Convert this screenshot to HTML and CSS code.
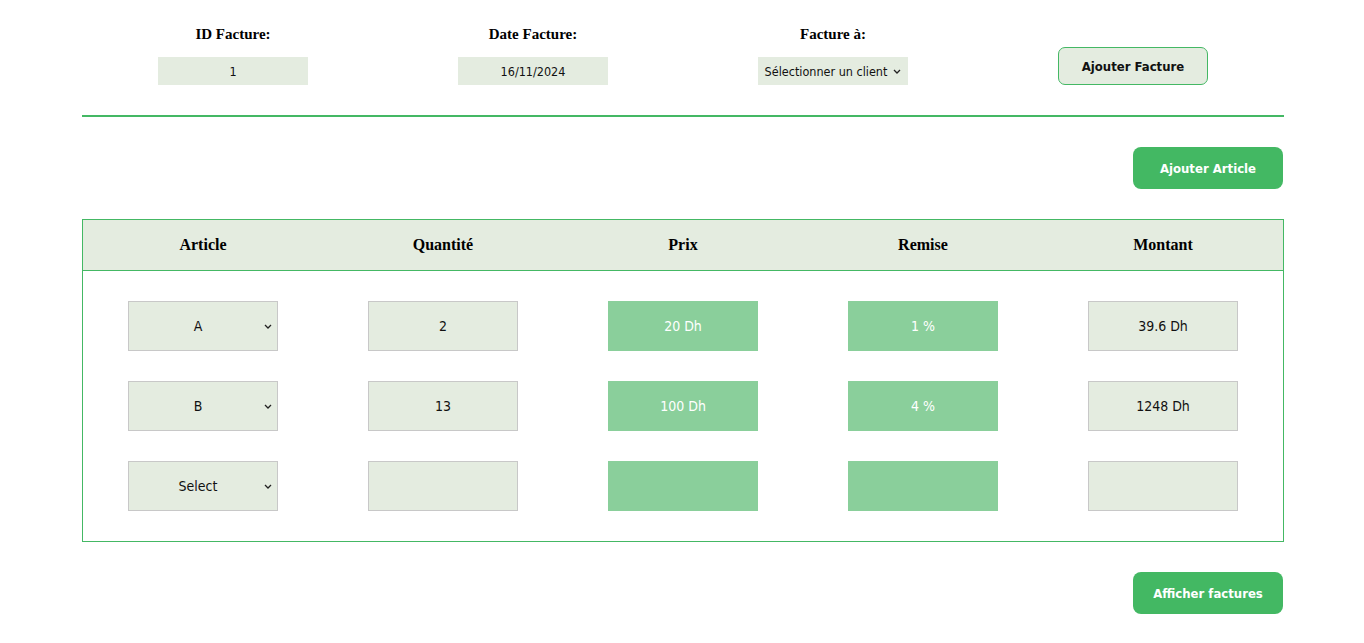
FILE: index.html
```html
<!DOCTYPE html>
<html lang="fr">
<head>
<meta charset="utf-8">
<title>Facture</title>
<link rel="stylesheet" href="styles.css">
</head>
<body>
<div class="page">
  <div class="top-form">
    <div class="field">
      <label class="field-label">ID Facture:</label>
      <input class="field-input" type="text" value="1">
    </div>
    <div class="field">
      <label class="field-label">Date Facture:</label>
      <input class="field-input" type="text" value="16/11/2024">
    </div>
    <div class="field">
      <label class="field-label">Facture à:</label>
      <div class="client-select">
        <span>Sélectionner un client</span>
        <svg class="chev-small" viewBox="0 0 8 5" width="8" height="5"><path d="M1 1 L4 4 L7 1" fill="none" stroke="#222" stroke-width="1.3"/></svg>
      </div>
    </div>
    <div class="field field-btn">
      <button class="btn-outline">Ajouter Facture</button>
    </div>
  </div>
  <hr class="divider">
  <div class="actions">
    <button class="btn-green">Ajouter Article</button>
  </div>
  <div class="table">
    <div class="table-head">
      <div>Article</div>
      <div>Quantité</div>
      <div>Prix</div>
      <div>Remise</div>
      <div>Montant</div>
    </div>
    <div class="table-body">
      <div class="row">
        <div class="cell"><div class="box select-box"><span>A</span><svg class="chev" viewBox="0 0 8 5" width="8" height="5"><path d="M1 1 L4 4 L7 1" fill="none" stroke="#222" stroke-width="1.3"/></svg></div></div>
        <div class="cell"><div class="box">2</div></div>
        <div class="cell"><div class="box box-green">20 Dh</div></div>
        <div class="cell"><div class="box box-green">1 %</div></div>
        <div class="cell"><div class="box">39.6 Dh</div></div>
      </div>
      <div class="row">
        <div class="cell"><div class="box select-box"><span>B</span><svg class="chev" viewBox="0 0 8 5" width="8" height="5"><path d="M1 1 L4 4 L7 1" fill="none" stroke="#222" stroke-width="1.3"/></svg></div></div>
        <div class="cell"><div class="box">13</div></div>
        <div class="cell"><div class="box box-green">100 Dh</div></div>
        <div class="cell"><div class="box box-green">4 %</div></div>
        <div class="cell"><div class="box">1248 Dh</div></div>
      </div>
      <div class="row">
        <div class="cell"><div class="box select-box"><span>Select</span><svg class="chev" viewBox="0 0 8 5" width="8" height="5"><path d="M1 1 L4 4 L7 1" fill="none" stroke="#222" stroke-width="1.3"/></svg></div></div>
        <div class="cell"><div class="box"></div></div>
        <div class="cell"><div class="box box-green"></div></div>
        <div class="cell"><div class="box box-green"></div></div>
        <div class="cell"><div class="box"></div></div>
      </div>
    </div>
  </div>
  <div class="actions actions-bottom">
    <button class="btn-green">Afficher factures</button>
  </div>
</div>
</body>
</html>
```
FILE: styles.css
```css
* { box-sizing: border-box; }
html, body { margin: 0; padding: 0; background: #fff; }
body { font-family: "DejaVu Sans Condensed", "DejaVu Sans", sans-serif; color: #111; }

.page {
  width: 1202px;
  margin-left: calc(50% - 600px);
  padding-top: 26px;
}

.top-form {
  display: grid;
  grid-template-columns: repeat(4, 300px);
  padding-left: 1px;
}
.field {
  display: flex;
  flex-direction: column;
  align-items: center;
}
.field-label {
  font-family: "Liberation Serif", serif;
  font-weight: bold;
  font-size: 15px;
  line-height: 17px;
  height: 17px;
  color: #000;
}
.field-input {
  margin-top: 14px;
  width: 150px;
  height: 28px;
  border: none;
  background: #e4ece0;
  text-align: center;
  font-family: "DejaVu Sans Condensed", "DejaVu Sans", sans-serif;
  font-size: 12.5px;
  color: #111;
  padding: 0;
  outline: none;
}
.client-select {
  margin-top: 14px;
  width: 150px;
  height: 28px;
  background: #e4ece0;
  display: flex;
  align-items: center;
  justify-content: center;
  gap: 6px;
  font-size: 12.5px;
  color: #111;
}
.chev-small { display: block; margin-top: 1px; }
.field-btn { justify-content: flex-start; padding-top: 21px; }
.btn-outline {
  width: 150px;
  height: 38px;
  border: 1px solid #44b864;
  border-radius: 7px;
  background: #e4ece0;
  font-family: "DejaVu Sans Condensed", "DejaVu Sans", sans-serif;
  font-weight: bold;
  font-size: 13px;
  color: #111;
  padding: 0;
}

.divider {
  margin: 30px 0 0 0;
  border: none;
  height: 2px;
  background: #44b864;
}

.actions {
  display: flex;
  justify-content: flex-end;
  margin-top: 30px;
}
.actions-bottom { margin-top: 30px; }
.btn-green {
  width: 150px;
  height: 42px;
  border: none;
  border-radius: 8px;
  background: #43b863;
  color: #fff;
  font-family: "DejaVu Sans Condensed", "DejaVu Sans", sans-serif;
  font-weight: bold;
  font-size: 13px;
  padding: 0;
  margin-right: 1px;
}

.table {
  margin-top: 30px;
  border: 1px solid #44b864;
}
.table-head {
  display: grid;
  grid-template-columns: repeat(5, 1fr);
  height: 51px;
  align-items: center;
  background: #e4ece0;
  border-bottom: 1px solid #44b864;
  font-family: "Liberation Serif", serif;
  font-weight: bold;
  font-size: 16px;
  color: #000;
  text-align: center;
}
.table-body {
  padding: 30px 0;
  display: flex;
  flex-direction: column;
  gap: 30px;
}
.row {
  display: grid;
  grid-template-columns: repeat(5, 1fr);
}
.cell {
  display: flex;
  justify-content: center;
}
.box {
  width: 150px;
  height: 50px;
  background: #e4ece0;
  border: 1px solid #c8c8c8;
  display: flex;
  align-items: center;
  justify-content: center;
  font-size: 14px;
  color: #111;
}
.box-green {
  background: #8acf9b;
  border-color: #8acf9b;
  color: #fff;
}
.select-box { position: relative; padding-right: 10px; }
.select-box .chev {
  position: absolute;
  right: 5px;
  top: 22px;
}
```
